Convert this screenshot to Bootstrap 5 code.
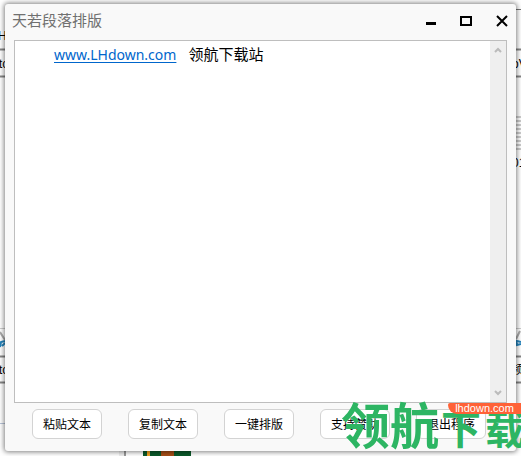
<!DOCTYPE html>
<html lang="zh-CN">
<head>
<meta charset="utf-8">
<meta name="viewport" content="width=device-width, initial-scale=1">
<title>天若段落排版</title>
<link href="https://cdn.jsdelivr.net/npm/bootstrap@5.3.0/dist/css/bootstrap.min.css" rel="stylesheet">
<style>
body { font-family: "Noto Sans", "Noto Sans CJK SC", sans-serif; background: #fff; color: #000; }
.desktop { height: 100vh; padding: 4px 5px; }
.backdrop { position: absolute; inset: 0; }
.app { background: #f9f9f9; border-radius: 3px; box-shadow: 0 0 5px 1px rgba(0,0,0,.5); height: calc(100vh - 9px); padding: 0 9px; }
.titlebar { height: 36px; margin-left: -2px; margin-right: -1px; }
.title { font: 15px/32px "Noto Sans CJK SC", sans-serif; color: #707070; }
.win { width: 12px; height: 34px; }
.editor { border: 1px solid #bebebe; background: #fff; min-height: 0; }
.doc { padding: 1px 39px; font: 15px/24px "Noto Sans CJK SC", sans-serif; }
.doc a { font-family: "Noto Sans", sans-serif; font-size: 14px; color: #0066cc; text-underline-offset: 2px; margin-right: 12px; }
.scroller { width: 16px; background: #efefef; padding: 5px 0; }
.actions { height: 48px; padding: 6px 21px 12px 18px; }
.act { width: 70px; height: 30px; background: #fff; border: 1px solid #d3d3d3; border-radius: 6px; color: #000; font: 12px/26px "Noto Sans CJK SC", sans-serif; }
.stamp { position: absolute; right: -4px; bottom: 3px; color: #2db563; font: 700 49px/52px "Noto Sans CJK SC", sans-serif; white-space: nowrap; pointer-events: none; }
.stamp-end { font-size: 40px; gap: 4px; padding-left: 2px; }
.site { position: absolute; right: 0; bottom: 42px; width: 73px; height: 11px; background: #ff6237; color: #fff; border-radius: 2px 0 0 9px; font: 11px/11px "Liberation Sans", sans-serif; text-align: center; }
</style>
<script src="https://cdn.jsdelivr.net/npm/bootstrap@5.3.0/dist/js/bootstrap.bundle.min.js"></script>
</head>
<body>
<div class="desktop position-relative overflow-hidden">
  <svg class="backdrop w-100 h-100" aria-hidden="true">
    <g>
      <path d="M0 49.500H600M0 76.500H600M0 356.500H600M0 382.500H600" stroke="#858585" stroke-width="2"/>
      <path d="M0 328.500H600" stroke="#ccc"/>
      <path d="M516 9.500H521" stroke="#777"/>
      <path d="M516 117h5M516 121h5M516 125h5M516 129h5M516 133h5M516 137h5M516 141h5M516 145h5M516 149h5" stroke="#ccc" stroke-width="2"/>
      <path d="M0 332l5 8M516 339l4-8" stroke="#aaa" stroke-width="2"/>
      <path d="M0 347l1-5 4-1M2 346l3-3M516 340l1 5 4-1M517 341l4 1" stroke="#2484bd" stroke-width="2" fill="none"/>
      <path d="M0 423.500H5" stroke="#b8c4d8"/>
    </g>
    <g font-family="Liberation Sans, sans-serif" font-size="12">
      <text x="-2" y="40">H</text><text x="-1" y="68">to</text><text x="-1" y="374">to</text>
      <text x="512" y="68">oV</text><text x="512" y="167">01</text><text x="511" y="374" font-family="Noto Sans CJK SC">频</text>
    </g>
    <path d="M119 451h5v5h-5z" fill="#eee"/><path d="M124 451h2v5h-2z" fill="#999"/>
    <path d="M143 451h48v5h-48z" fill="#0b5a2a"/><path d="M161 451h13v5h-13z" fill="#a64e17"/><path d="M147 451h3v5h-3z" fill="#f0a020"/>
  </svg>
  <main class="app position-relative d-flex flex-column">
    <header class="titlebar d-flex justify-content-between">
      <h1 class="title m-0">天若段落排版</h1>
      <div class="d-flex gap-4">
        <button class="win btn p-0 border-0 d-flex align-items-center" aria-label="最小化"><svg width="12" height="12"><path d="M2 7h10v3H2z"/></svg></button>
        <button class="win btn p-0 border-0 d-flex align-items-center" aria-label="最大化"><svg width="12" height="12"><path d="M1 2h10v8H1z" fill="none" stroke="#000" stroke-width="2"/></svg></button>
        <button class="win btn p-0 border-0 d-flex align-items-center" aria-label="关闭"><svg width="12" height="12"><path d="M1 1l10 10M11 1L1 11" stroke="#000" stroke-width="2"/></svg></button>
      </div>
    </header>
    <section class="editor d-flex flex-grow-1">
      <div class="doc flex-grow-1"><a href="#">www.LHdown.com</a>领航下载站</div>
      <div class="scroller d-flex flex-column justify-content-between align-items-center">
        <svg width="8" height="8"><path d="M1 6l3-3 3 3" fill="none" stroke="#bbb" stroke-width="2"/></svg>
        <svg width="8" height="8"><path d="M1 2l3 3 3-3" fill="none" stroke="#bbb" stroke-width="2"/></svg>
      </div>
    </section>
    <footer class="actions d-flex justify-content-between">
      <button class="act btn p-0">粘贴文本</button>
      <button class="act btn p-0">复制文本</button>
      <button class="act btn p-0">一键排版</button>
      <button class="act btn p-0">支持赞助</button>
      <button class="act btn p-0">退出程序</button>
    </footer>
  </main>
  <div class="stamp d-flex align-items-baseline">领航<span class="stamp-end d-flex"><span>下</span><span>载</span></span></div>
  <div class="site">lhdown.com</div>
</div>
</body>
</html>
